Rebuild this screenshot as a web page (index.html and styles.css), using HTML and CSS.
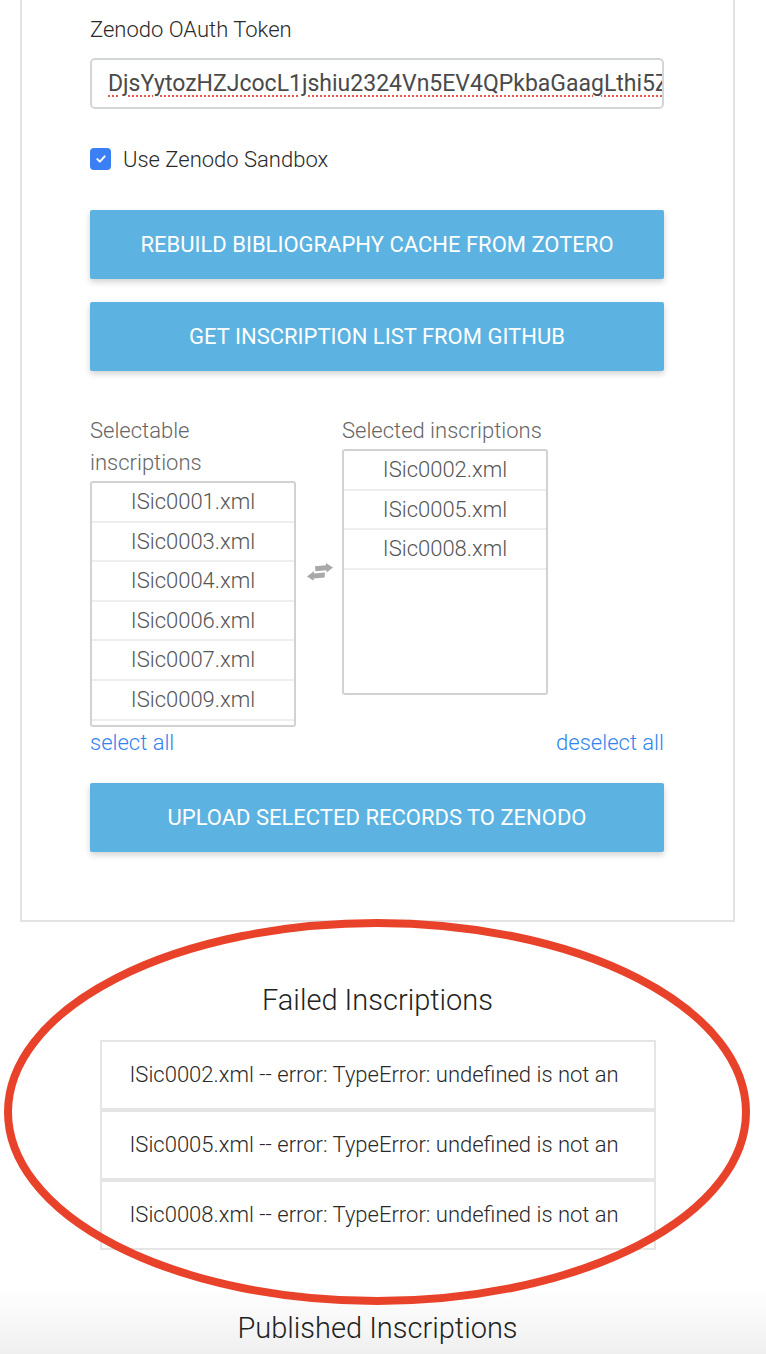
FILE: index.html
```html
<!DOCTYPE html>
<html lang="en">
<head>
<meta charset="utf-8">
<title>Zenodo upload</title>
<link rel="stylesheet" href="styles.css">
</head>
<body>
<div class="page">
  <section class="card">
    <label class="field-label" for="token">Zenodo OAuth Token</label>
    <div class="input-box">
      <span class="input-text" id="token">DjsYytozHZJcocL1jshiu2324Vn5EV4QPkbaGaagLthi5Z</span>
    </div>

    <div class="check-row">
      <span class="checkbox">
        <svg viewBox="0 0 22 22" width="22" height="22"><path d="M6.5 11.2 L9.6 14.2 L15.5 7.8" fill="none" stroke="#fff" stroke-width="2.4" stroke-linecap="round" stroke-linejoin="round"/></svg>
      </span>
      <span class="check-label">Use Zenodo Sandbox</span>
    </div>

    <button class="btn btn-first">Rebuild Bibliography Cache from Zotero</button>
    <button class="btn btn-second">Get Inscription list from GitHub</button>

    <div class="pickers">
      <div class="picker">
        <div class="picker-label">Selectable inscriptions</div>
        <ul class="picker-list">
          <li>ISic0001.xml</li>
          <li>ISic0003.xml</li>
          <li>ISic0004.xml</li>
          <li>ISic0006.xml</li>
          <li>ISic0007.xml</li>
          <li>ISic0009.xml</li>
        </ul>
      </div>
      <div class="swap">
        <svg viewBox="0 0 28 18" width="28" height="18">
          <path d="M9 3.2 L20 2.2 L19.8 0 L27 4.6 L20.6 9.6 L20.4 7.2 L9.4 8.2 Z" fill="#a8a8a8"/>
          <path d="M19 9.4 L8 10.4 L7.8 8.2 L1 13.4 L7.6 17.8 L7.6 15.4 L18.6 14.4 Z" fill="#a8a8a8"/>
        </svg>
      </div>
      <div class="picker">
        <div class="picker-label">Selected inscriptions</div>
        <ul class="picker-list">
          <li>ISic0002.xml</li>
          <li>ISic0005.xml</li>
          <li>ISic0008.xml</li>
        </ul>
      </div>
    </div>

    <div class="links">
      <a href="#" class="link">select all</a>
      <a href="#" class="link">deselect all</a>
    </div>

    <button class="btn btn-upload">Upload selected records to Zenodo</button>
  </section>

  <h2 class="section-title failed-title">Failed Inscriptions</h2>
  <ul class="failed-list">
    <li>ISic0002.xml -- error: TypeError: undefined is not an</li>
    <li>ISic0005.xml -- error: TypeError: undefined is not an</li>
    <li>ISic0008.xml -- error: TypeError: undefined is not an</li>
  </ul>
</div>

<div class="published">
  <h2 class="section-title published-title">Published Inscriptions</h2>
</div>

<svg class="annotation" viewBox="0 0 766 420" width="766" height="420">
  <ellipse cx="377" cy="212" rx="369" ry="189" fill="none" stroke="#e8432a" stroke-width="8"/>
</svg>
</body>
</html>
```

FILE: styles.css
```css
html, body {
  margin: 0;
  padding: 0;
  background: #ffffff;
}

body {
  position: relative;
  font-family: Roboto, "Liberation Sans", Arial, sans-serif;
  color: #333;
  overflow: hidden;
  height: 1354px;
}

.page {
  margin-left: 20px;
  width: 715px;
}

.card {
  box-sizing: border-box;
  width: 715px;
  border: 2px solid #e3e3e3;
  border-top: none;
  padding: 16px 69px 68px 68px;
  display: flex;
  flex-direction: column;
}

.field-label {
  font-size: 22px;
  line-height: 28px;
  color: #2a2a2a;
  font-weight: 300;
}

.input-box {
  margin-top: 14px;
  box-sizing: border-box;
  height: 51px;
  border: 2px solid #d3d6d9;
  border-radius: 5px;
  padding: 0 2px 0 16px;
  display: flex;
  align-items: center;
  overflow: hidden;
  white-space: nowrap;
}

.input-text {
  font-size: 23px;
  font-weight: 400;
  color: #4a4a4a;
  text-decoration: underline dotted #e8574a;
  text-underline-offset: 4px;
  text-decoration-thickness: 2px;
}

.check-row {
  margin-top: 38px;
  height: 24px;
  display: flex;
  align-items: center;
  gap: 12px;
}

.checkbox {
  width: 21px;
  height: 22px;
  border-radius: 4px;
  background: #3a7ff4;
  display: flex;
  align-items: center;
  justify-content: center;
}

.checkbox svg {
  width: 18px;
  height: 18px;
}

.check-label {
  font-size: 22px;
  font-weight: 300;
  color: #2a2a2a;
}

.btn {
  box-sizing: border-box;
  height: 69px;
  width: 100%;
  border: none;
  border-radius: 2px;
  background: #5cb2e0;
  color: #fff;
  font-family: Roboto, "Liberation Sans", Arial, sans-serif;
  font-size: 22px;
  font-weight: 400;
  text-transform: uppercase;
  box-shadow: 0 3px 6px rgba(0, 0, 0, 0.18);
  padding: 0;
}

.btn-first {
  margin-top: 39px;
}

.btn-second {
  margin-top: 23px;
}

.btn-upload {
  margin-top: 24px;
}

.pickers {
  margin-top: 44px;
  display: grid;
  grid-template-columns: 206px 46px 206px;
  align-items: start;
}

.picker-label {
  font-size: 22px;
  line-height: 32px;
  color: #666;
  font-weight: 300;
}

.picker-list {
  list-style: none;
  margin: 2px 0 0;
  padding: 0;
  box-sizing: border-box;
  height: 246px;
  border: 2px solid #d2d2d2;
  border-radius: 3px;
  overflow: hidden;
}

.picker-list li {
  box-sizing: border-box;
  height: 39.6px;
  line-height: 37.6px;
  border-bottom: 2px solid #eeeeee;
  text-align: center;
  font-size: 22px;
  font-weight: 300;
  color: #555;
}

.swap {
  display: flex;
  justify-content: center;
  padding-top: 148px;
  padding-left: 2px;
}

.links {
  display: flex;
  justify-content: space-between;
  line-height: 32px;
  font-size: 22px;
}

.link {
  color: #3084ee;
  text-decoration: none;
  font-weight: 300;
}

.section-title {
  margin: 0;
  text-align: center;
  font-size: 29px;
  line-height: 36px;
  font-weight: 300;
  color: #222;
}

.failed-title {
  margin-top: 60px;
}

.failed-list {
  list-style: none;
  margin: 22px auto 0;
  padding: 0;
  width: 556px;
}

.failed-list li {
  box-sizing: border-box;
  height: 70px;
  line-height: 66px;
  border: 2px solid #e5e5e5;
  padding-left: 28px;
  font-size: 22px;
  font-weight: 300;
  color: #2a2a2a;
  white-space: nowrap;
  overflow: hidden;
}

.published {
  margin-top: 34px;
  height: 70px;
  background: linear-gradient(to bottom, #ffffff 0%, #f9f9f9 45%, #efefef 100%);
}

.published-title {
  width: 715px;
  margin-left: 20px;
  padding-top: 26px;
}

.annotation {
  position: absolute;
  left: 0;
  top: 900px;
  pointer-events: none;
}
```
